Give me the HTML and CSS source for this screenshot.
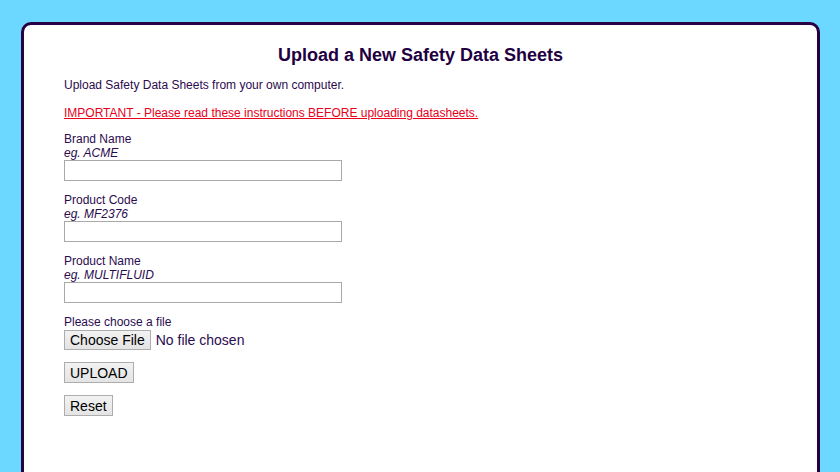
FILE: index.html
```
<!DOCTYPE html>
<html lang="en">
<head>
    <meta charset="UTF-8">
    <title>Upload a New Safety Data Sheets</title>
    <link rel="stylesheet" href="styles.css">
</head>
<body>

<div class="card">
    <h1>Upload a New Safety Data Sheets</h1>
    <p>Upload Safety Data Sheets from your own computer.</p>
    <p class="notice"><a href="#" class="important">IMPORTANT - Please read these instructions BEFORE uploading datasheets.</a></p>

    <form class="upload-form">
        <div class="field">
            <label for="brand">Brand Name</label>
            <span class="hint">eg. ACME</span>
            <input type="text" id="brand" class="text-input">
        </div>
        <div class="field">
            <label for="code">Product Code</label>
            <span class="hint">eg. MF2376</span>
            <input type="text" id="code" class="text-input">
        </div>
        <div class="field">
            <label for="name">Product Name</label>
            <span class="hint">eg. MULTIFLUID</span>
            <input type="text" id="name" class="text-input">
        </div>
        <div class="field">
            <label for="file">Please choose a file</label>
            <div class="file-row">
                <button type="button" class="btn">Choose File</button>
                <span class="file-name">No file chosen</span>
            </div>
        </div>
        <div class="field">
            <button type="button" class="btn btn-tall">UPLOAD</button>
        </div>
        <div class="field">
            <button type="reset" class="btn btn-tall">Reset</button>
        </div>
    </form>
</div>

</body>
</html>
```

FILE: styles.css
```
body {
    background-color: #6dd8ff;
    font-family: "Liberation Sans", Arial, sans-serif;
    font-size: 12px;
    line-height: 14px;
    color: #2b0b4f;
    margin: 0;
    height: 472px;
    overflow: hidden;
}

.card {
    background-color: #fff;
    border: 3px solid #2a0045;
    border-radius: 10px;
    margin: 22px 20px 0 21px;
    padding: 20px 40px;
    min-height: 500px;
}

h1 {
    font-size: 18px;
    line-height: 21px;
    text-align: center;
    margin: 0 0 12px 0;
    color: #22003f;
}

p {
    margin: 0 0 14px 0;
}

p.notice {
    margin-bottom: 12px;
}

.important {
    color: #e8001c;
    text-decoration: underline;
}

.upload-form {
    margin: 0;
}

.field {
    margin-bottom: 12px;
}

.field label,
.field .hint {
    display: block;
}

.hint {
    font-style: italic;
}

.text-input {
    display: block;
    width: 278px;
    height: 21px;
    box-sizing: border-box;
    border: 1px solid #a9a9a9;
    padding: 1px 2px;
    margin: 0;
    font-family: inherit;
}

.file-row {
    display: flex;
    align-items: center;
    margin-top: 1px;
}

.file-name {
    font-size: 14px;
    margin-left: 5px;
    color: #2b0b4f;
}

.btn {
    font-family: "Liberation Sans", Arial, sans-serif;
    font-size: 14px;
    line-height: 16px;
    color: #000;
    background: linear-gradient(#f2f2f2, #e4e4e4);
    border: 1px solid #adadad;
    border-radius: 0;
    padding: 1px 5px;
    margin: 0;
    height: 20px;
}

.btn-tall {
    height: 21px;
}
```
